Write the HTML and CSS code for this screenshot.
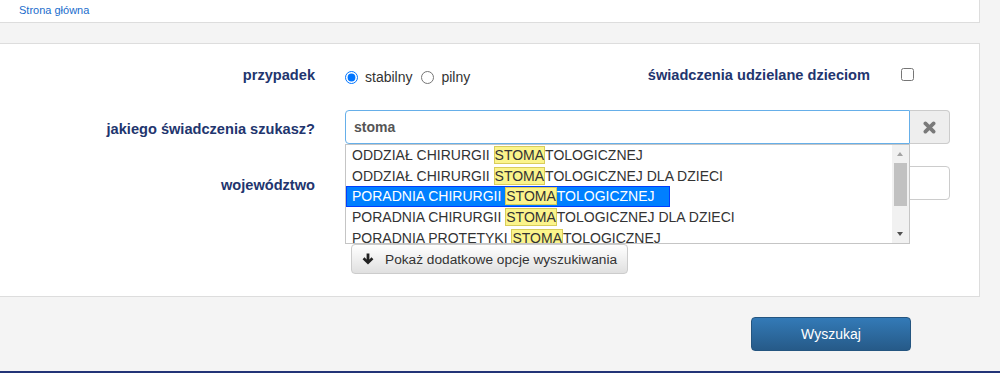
FILE: index.html
```html
<!DOCTYPE html>
<html lang="pl">
<head>
<meta charset="utf-8">
<title>Wyszukiwarka świadczeń</title>
<link rel="stylesheet" href="styles.css">
</head>
<body>
<div class="page">
  <div class="topbar"><a class="crumb" href="#">Strona główna</a></div>

  <div class="panel">
    <div class="row row-case">
      <div class="label">przypadek</div>
      <div class="control">
        <div class="radios">
          <label class="radio"><input type="radio" name="case" checked>stabilny</label>
          <label class="radio"><input type="radio" name="case">pilny</label>
        </div>
        <div class="kids">świadczenia udzielane dzieciom</div>
        <input class="check" type="checkbox">
      </div>
    </div>

    <div class="row">
      <div class="label">jakiego świadczenia szukasz?</div>
      <div class="control input-group">
        <div class="field">stoma</div>
        <button class="clear" type="button" aria-label="Wyczyść">
          <svg width="13" height="13" viewBox="0 0 12 12"><path d="M2.2 2.2 L9.8 9.8 M9.8 2.2 L2.2 9.8" stroke="#7a7a7a" stroke-width="3.4" stroke-linecap="round"/></svg>
        </button>
        <div class="menu">
          <div class="items">
            <div class="item">ODDZIAŁ CHIRURGII <span class="hl">STOMA</span>TOLOGICZNEJ</div>
            <div class="item">ODDZIAŁ CHIRURGII <span class="hl">STOMA</span>TOLOGICZNEJ DLA DZIECI</div>
            <div class="item active">PORADNIA CHIRURGII <span class="hl">STOMA</span>TOLOGICZNEJ</div>
            <div class="item">PORADNIA CHIRURGII <span class="hl">STOMA</span>TOLOGICZNEJ DLA DZIECI</div>
            <div class="item">PORADNIA PROTETYKI <span class="hl">STOMA</span>TOLOGICZNEJ</div>
          </div>
          <div class="sb">
            <span class="sb-up"></span>
            <span class="sb-thumb"></span>
            <span class="sb-down"></span>
          </div>
        </div>
      </div>
    </div>

    <div class="row row-voiv">
      <div class="label">województwo</div>
      <div class="control"><div class="select"></div></div>
    </div>

    <div class="row row-more">
      <button class="btn-more" type="button">
        <svg width="12" height="12" viewBox="0 0 12 12"><path d="M6 11.6 L0.6 6.2 L2.5 4.3 L4.6 6.4 V0.6 H7.4 V6.4 L9.5 4.3 L11.4 6.2 Z" fill="#222"/></svg>
        <span>Pokaż dodatkowe opcje wyszukiwania</span>
      </button>
    </div>
  </div>

  <div class="actions">
    <button class="btn-search" type="button">Wyszukaj</button>
  </div>
  <div class="bottom-bar"></div>
</div>
</body>
</html>
```
FILE: styles.css
```css
* { box-sizing: border-box; }
html, body { margin: 0; padding: 0; background: #fff; }
body {
  font-family: "Liberation Sans", Arial, sans-serif;
  font-size: 14px;
  color: #333;
}
.page { width: 1000px; background: #f4f4f4; }

.topbar {
  width: 980px;
  height: 23px;
  background: #fff;
  border-right: 1px solid #ddd;
  border-bottom: 1px solid #ddd;
  padding: 1px 0 0 19px;
}
.crumb {
  font-size: 11px;
  line-height: 13px;
  color: #1a6dcc;
  text-decoration: none;
}

.panel {
  margin-top: 20px;
  width: 980px;
  background: #fff;
  border-top: 1px solid #ddd;
  border-right: 1px solid #ddd;
  border-bottom: 1px solid #ddd;
  padding: 16px 0 22px;
}

.row { display: flex; align-items: flex-start; height: 34px; }
.row + .row { margin-top: 16px; }
.row.row-voiv { margin-top: 22px; }
.row.row-more { margin-top: 44px; height: 30px; padding-left: 345px; }

.label {
  flex: 0 0 315px;
  margin-right: 30px;
  text-align: right;
  font-weight: bold;
  font-size: 14.6px;
  color: #22356e;
  line-height: 20px;
  padding-top: 9px;
}
.row-case .label { padding-top: 5px; }

.control { flex: 0 0 605px; display: flex; align-items: flex-start; }

.radios { display: flex; padding-top: 7px; line-height: 20px; }
.radio { display: flex; align-items: center; margin-right: 9px; color: #333; }
.radio input { margin: 0 7px 0 0; width: 13px; height: 13px; }
.kids {
  margin-left: auto;
  font-weight: bold;
  font-size: 14.6px;
  color: #22356e;
  line-height: 20px;
  padding-top: 5px;
}
.check { margin: 8px 36px 0 31px; width: 13px; height: 13px; }

.input-group { position: relative; height: 34px; }
.field {
  width: 565px;
  height: 34px;
  border: 1px solid #66afe9;
  border-radius: 4px 0 0 4px;
  padding: 0 8px;
  font-weight: bold;
  color: #555;
  line-height: 32px;
  background: #fff;
}
.clear {
  width: 40px;
  height: 34px;
  background: #eee;
  border: 1px solid #ccc;
  border-left: 0;
  border-radius: 0 4px 4px 0;
  display: flex;
  align-items: center;
  justify-content: center;
  padding: 0;
}

.menu {
  position: absolute;
  top: 34px;
  left: 0;
  width: 565px;
  height: 100px;
  border: 1px solid #c5c5c5;
  background: #fff;
  overflow: hidden;
  z-index: 2;
}
.items { padding-right: 17px; }
.item {
  width: fit-content;
  border: 1px solid transparent;
  padding: 2px 14px 2px 5px;
  line-height: 14.7px;
  white-space: nowrap;
  color: #333;
}
.item.active { background: #007fff; border-color: #003eff; color: #fff; }
.hl { background: #fbf48b; border: 1px solid #d9cd5a; color: #333; }

.sb {
  position: absolute;
  top: 0; right: 0; bottom: 0;
  width: 17px;
  background: #f1f1f1;
}
.sb-up, .sb-down, .sb-thumb { position: absolute; display: block; }
.sb-up {
  top: 7px; left: 5px;
  border-left: 3.5px solid transparent;
  border-right: 3.5px solid transparent;
  border-bottom: 4px solid #a3a3a3;
}
.sb-thumb { top: 18px; left: 2px; width: 13px; height: 43px; background: #c1c1c1; }
.sb-down {
  top: 87px; left: 5px;
  border-left: 3.5px solid transparent;
  border-right: 3.5px solid transparent;
  border-top: 4px solid #505050;
}

.select {
  width: 605px;
  height: 34px;
  border: 1px solid #ccc;
  border-radius: 4px;
  background: #fff;
}

.btn-more {
  margin-left: 6px;
  height: 30px;
  padding: 0 10px;
  border: 1px solid #ccc;
  border-radius: 4px;
  background: linear-gradient(#fff, #e0e0e0);
  font-family: "Liberation Sans", Arial, sans-serif;
  font-size: 13.7px;
  color: #333;
  display: flex;
  align-items: center;
  gap: 11px;
}

.actions {
  width: 980px;
  display: flex;
  justify-content: flex-end;
  padding: 20px 69px 20px 0;
}
.btn-search {
  width: 160px;
  height: 34px;
  border: 1px solid #245580;
  border-radius: 4px;
  background: linear-gradient(#337ab7, #265a88);
  color: #fff;
  font-family: "Liberation Sans", Arial, sans-serif;
  font-size: 14px;
}
.bottom-bar { height: 10px; background: #223477; }
```
